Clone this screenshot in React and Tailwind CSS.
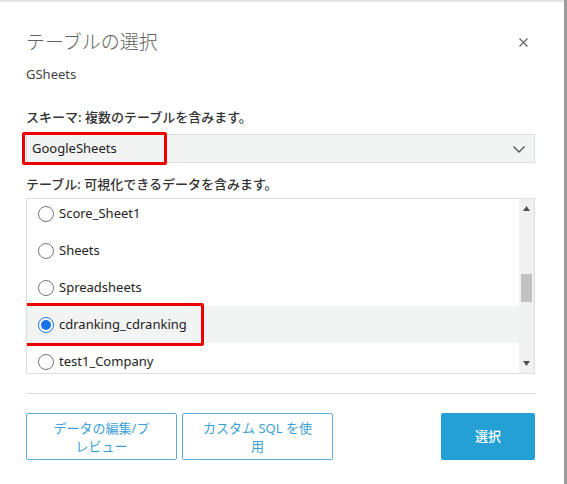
import React from 'react';

const TABLES = ['Score_Sheet1', 'Sheets', 'Spreadsheets', 'cdranking_cdranking', 'test1_Company'];
const SELECTED = 'cdranking_cdranking';

function Radio({ checked }) {
  return (
    <span
      className={`flex h-[16px] w-[16px] shrink-0 items-center justify-center rounded-full border ${
        checked ? 'border-[#1a73e8]' : 'border-[#767676]'
      } bg-white`}
    >
      {checked && <span className="h-[10px] w-[10px] rounded-full bg-[#1a73e8]" />}
    </span>
  );
}

export default function App() {
  return (
    <div
      className="flex h-[484px] w-[567px] overflow-hidden bg-white text-[#333]"
      style={{ fontFamily: '"Noto Sans", "Noto Sans CJK JP", sans-serif' }}
    >
      <div className="flex-1 border-t-2 border-[#e5e5e5] pl-[26px] pr-[29px] pt-[25px]">
        <div className="flex items-center justify-between">
          <h2 className="text-[19px] font-light leading-[30px] text-[#5f5f5f]">テーブルの選択</h2>
          <svg className="mr-[7px]" width="9" height="9" viewBox="0 0 9 9" stroke="#666" strokeWidth="1.2">
            <path d="M0.5 0.5 8.5 8.5M8.5 0.5 0.5 8.5" />
          </svg>
        </div>
        <p className="mt-[8px] text-[13px] leading-[18px] text-[#444]">GSheets</p>

        <p className="mt-[25px] text-[13px] font-medium leading-[18px] text-[#333]">スキーマ: 複数のテーブルを含みます。</p>
        <div className="relative mt-[8px] flex h-[29px] items-center justify-between border border-[#ddd] bg-[#f2f3f3] pl-[5px] pr-[8px]">
          <span className="text-[13px] text-[#222]">GoogleSheets</span>
          <svg width="14" height="14" viewBox="0 0 14 14" fill="none" stroke="#555" strokeWidth="1.4">
            <path d="M1.5 4.5 7 10 12.5 4.5" />
          </svg>
          <div className="absolute left-[-5px] top-[-3px] h-[33px] w-[145px] rounded-[2px] border-[3px] border-[#ee0000]" />
        </div>

        <p className="mt-[12px] text-[13px] font-medium leading-[18px] text-[#333]">テーブル: 可視化できるデータを含みます。</p>
        <div className="relative mt-[5px] flex h-[176px] border border-[#ddd]">
          <div className="flex-1 overflow-hidden">
            <div className="-mt-[4px]">
              {TABLES.map((t) => (
                <div
                  key={t}
                  className={`relative flex h-[37px] items-center gap-[5px] pl-[11px] text-[13px] text-[#222] ${
                    t === SELECTED ? 'bg-[#f2f3f3]' : ''
                  }`}
                >
                  <Radio checked={t === SELECTED} />
                  <span>{t}</span>
                  {t === SELECTED && (
                    <div className="absolute left-[-6px] top-[-3px] h-[43px] w-[183px] rounded-[2px] border-[3px] border-[#ee0000]" />
                  )}
                </div>
              ))}
            </div>
          </div>
          <div className="flex w-[15px] flex-col items-center bg-[#f1f1f1]">
            <svg className="mt-[7px]" width="7" height="5" viewBox="0 0 7 5"><path d="M0 5 3.5 0 7 5Z" fill="#505050" /></svg>
            <div className="mt-[63px] h-[28px] w-[11px] bg-[#c1c1c1]" />
            <div className="flex-1" />
            <svg className="mb-[7px]" width="7" height="5" viewBox="0 0 7 5"><path d="M0 0 3.5 5 7 0Z" fill="#505050" /></svg>
          </div>
        </div>

        <div className="mt-[19px] border-t border-[#ddd]" />

        <div className="mt-[19px] flex items-center">
          <button className="flex h-[47px] w-[151px] items-center justify-center rounded-[2px] border border-[#5aafdc] bg-white px-2 text-[13px] leading-[18px] text-[#3d9fd4]">
            データの編集/プ<br />レビュー
          </button>
          <button className="ml-[5px] flex h-[47px] w-[151px] items-center justify-center rounded-[2px] border border-[#5aafdc] bg-white px-2 text-[13px] leading-[18px] text-[#3d9fd4]">
            カスタム SQL を使<br />用
          </button>
          <div className="flex-1" />
          <button className="h-[47px] w-[94px] rounded-[2px] bg-[#24a0d6] text-[13px] font-medium text-white">
            選択
          </button>
        </div>
      </div>
      <div className="w-[3px] bg-[#9a9a9a]" />
    </div>
  );
}
